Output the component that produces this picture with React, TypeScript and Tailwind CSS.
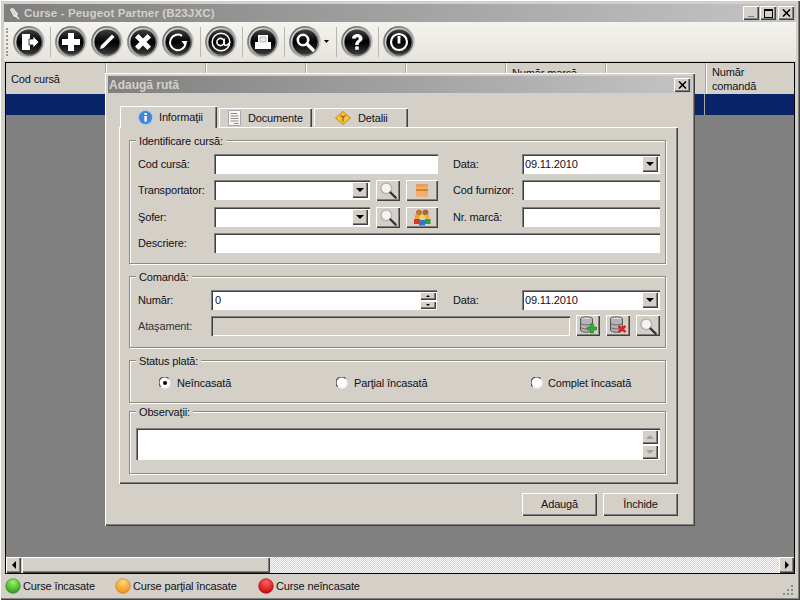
import React, { useId } from "react";

const raised = "shadow-[inset_1px_1px_0_#ffffff,inset_-1px_-1px_0_#404040,inset_-2px_-2px_0_#808080]";
const sunken = "shadow-[inset_1px_1px_0_#808080,inset_2px_2px_0_#404040,inset_-1px_-1px_0_#ffffff]";

function Round({ children }: { children: React.ReactNode }) {
  const id = useId();
  return (
    <svg width="32" height="32" viewBox="0 0 32 32" className="shrink-0">
      <defs>
        <linearGradient id={id + "r"} x1="0" y1="0" x2="1" y2="1">
          <stop offset="0" stopColor="#5a5a5a" />
          <stop offset="0.45" stopColor="#9a9a9a" />
          <stop offset="1" stopColor="#f0f0f0" />
        </linearGradient>
        <linearGradient id={id + "m"} x1="0" y1="0" x2="1" y2="1">
          <stop offset="0" stopColor="#f0f0f0" />
          <stop offset="1" stopColor="#505050" />
        </linearGradient>
        <linearGradient id={id + "b"} x1="0" y1="0" x2="0" y2="1">
          <stop offset="0" stopColor="#404040" />
          <stop offset="0.5" stopColor="#000000" />
          <stop offset="1" stopColor="#3a3a3a" />
        </linearGradient>
      </defs>
      <circle cx="16" cy="16" r="15.9" fill={`url(#${id}r)`} />
      <circle cx="16" cy="16" r="14.2" fill={`url(#${id}m)`} />
      <circle cx="16" cy="16" r="12.6" fill={`url(#${id}b)`} />
      {children}
    </svg>
  );
}

function Sep({ className }: { className: string }) {
  return <div className={"w-[1px] h-[30px] bg-[#b8b6ae] shrink-0 " + className} />;
}

function Glass({ size = 18 }: { size?: number }) {
  return (
    <svg width={size} height={size} viewBox="0 0 16 16">
      <circle cx="6.5" cy="6.5" r="4.8" fill="#f4f4f0" stroke="#b4b4b4" strokeWidth="1.4" />
      <path d="M10.2 10.2 L14.8 14.8" stroke="#333333" strokeWidth="2" strokeLinecap="round" />
    </svg>
  );
}

function Tri({ size = 4 }: { size?: number }) {
  return (
    <svg width={size * 2} height={size} viewBox="0 0 8 4">
      <path d="M0 0 H8 L4 4 Z" fill="#000000" />
    </svg>
  );
}

function Combo({ w, value }: { w: string; value?: string }) {
  return (
    <div className={`${w} h-[20px] bg-white ${sunken} flex items-center justify-between pl-[3px] pr-[2px] shrink-0`}>
      <span className="text-[#101020]">{value}</span>
      <div className={`w-[16px] h-[16px] bg-[#d4d0c8] ${raised} flex items-center justify-center`}>
        <Tri />
      </div>
    </div>
  );
}

function Input({ w }: { w: string }) {
  return <div className={`${w} h-[20px] bg-white ${sunken} shrink-0`} />;
}

function IconBtn({ w, children }: { w: string; children: React.ReactNode }) {
  return (
    <div className={`${w} h-[21px] bg-[#d4d0c8] ${raised} flex items-center justify-center shrink-0`}>{children}</div>
  );
}

function Group({ title, cls, children }: { title: string; cls: string; children: React.ReactNode }) {
  return (
    <div className={`w-[537px] border border-[#8c8a84] shadow-[inset_1px_1px_0_#ffffff,1px_1px_0_#ffffff] ${cls}`}>
      <div className="-mt-[6px] ml-[6px] w-fit px-[3px] h-[13px] leading-[13px] bg-[#d4d0c8]">{title}</div>
      {children}
    </div>
  );
}

function Radio({ checked }: { checked?: boolean }) {
  return (
    <svg width="12" height="12" viewBox="0 0 12 12" className="shrink-0">
      <circle cx="6" cy="6" r="5.5" fill="#ffffff" />
      <path d="M1.6 9.6 A5.5 5.5 0 0 1 9.6 1.6" fill="none" stroke="#555555" strokeWidth="1.3" />
      <path d="M2.4 9.9 A5.5 5.5 0 0 0 9.9 2.4" fill="none" stroke="#f0f0f0" strokeWidth="1" />
      {checked && <circle cx="6" cy="6" r="2" fill="#000000" />}
    </svg>
  );
}

function Dot({ from, to, edge }: { from: string; to: string; edge: string }) {
  const id = useId();
  return (
    <svg width="16" height="16" viewBox="0 0 16 16" className="shrink-0">
      <defs>
        <radialGradient id={id} cx="0.5" cy="0.25" r="0.8">
          <stop offset="0" stopColor={from} />
          <stop offset="1" stopColor={to} />
        </radialGradient>
      </defs>
      <circle cx="8" cy="8" r="7.3" fill={`url(#${id})`} stroke={edge} strokeWidth="0.6" />
    </svg>
  );
}

function Db({ children }: { children: React.ReactNode }) {
  return (
    <svg width="21" height="19" viewBox="0 0 20 19">
      <ellipse cx="8" cy="3" rx="6" ry="2.2" fill="#d8d8d8" stroke="#555555" />
      <path d="M2 3 V14 C2 17 14 17 14 14 V3" fill="#b4b4b4" stroke="#555555" />
      <path d="M2 7 C2 9.5 14 9.5 14 7 M2 11 C2 13.5 14 13.5 14 11" fill="none" stroke="#666666" />
      {children}
    </svg>
  );
}

function Header({ w, children }: { w: string; children?: React.ReactNode }) {
  return (
    <div className={`${w} h-[31px] px-[5px] flex items-center border-r border-[#a8a59d] shadow-[1px_0_0_#ffffff] leading-[14px] shrink-0`}>
      {children}
    </div>
  );
}

export default function App() {
  return (
    <div
      className={`relative w-[800px] h-[600px] overflow-hidden bg-[#d4d0c8] pt-[4px] px-[4px] pb-[2px] text-[11px] tracking-[-0.15px] text-[#10101c] flex flex-col ${raised} font-['Liberation_Sans',Arial,sans-serif]`}
    >
      {/* Title bar */}
      <div className="h-[18px] shrink-0 bg-gradient-to-r from-[#808080] to-[#c4c4c4] flex items-center justify-between pl-[3px] pr-[2px]">
        <div className="flex items-center gap-[3px]">
          <svg width="14" height="14" viewBox="0 0 14 14">
            <path d="M2 3 L6 1 L12 8 L9 12 L6 11 Z" fill="#d8d8d8" stroke="#606060" strokeWidth="0.7" />
            <path d="M8 9 L12 13" stroke="#f0f0f0" strokeWidth="1.5" />
          </svg>
          <span className="font-bold text-[#d4d0c8] text-[11.6px] tracking-[0.1px]">Curse - Peugeot Partner (B23JXC)</span>
        </div>
        <div className="flex gap-[1px]">
          <div className={`w-[16px] h-[14px] bg-[#d4d0c8] ${raised} flex items-end justify-center pb-[3px]`}>
            <div className="w-[6px] h-[1px] bg-[#808080]" />
          </div>
          <div className={`w-[16px] h-[14px] bg-[#d4d0c8] mr-[1px] ${raised} flex items-center justify-center`}>
            <div className="w-[9px] h-[9px] border border-black border-t-2" />
          </div>
          <div className={`w-[16px] h-[14px] bg-[#d4d0c8] ${raised} flex items-center justify-center`}>
            <svg width="9" height="8" viewBox="0 0 9 8"><path d="M1 0.5 L8 7.5 M8 0.5 L1 7.5" stroke="#000" strokeWidth="1.5" /></svg>
          </div>
        </div>
      </div>

      {/* Toolbar */}
      <div className="h-[39px] shrink-0 bg-gradient-to-b from-[#f4f3ee] to-[#e6e4dc] flex items-center pl-[2px]">
        <div className="w-[2px] h-[28px] border-l-2 border-dotted border-[#9a9a94] mr-[5px] shrink-0" />
        <Round>
          <path d="M9 8 H17 V24 H9 Z" fill="#fff" />
          <path d="M16 13 H20 V10 L26 16 L20 22 V19 H16 Z" fill="#fff" stroke="#111" strokeWidth="0.8" />
        </Round>
        <Sep className="ml-[5px] mr-[4px]" />
        <Round><path d="M13 7 H19 V13 H25 V19 H19 V25 H13 V19 H7 V13 H13 Z" fill="#fff" /></Round>
        <div className="w-[4px] shrink-0" />
        <Round><path d="M9 23 L10 19.5 L21 8.5 L23.5 11 L12.5 22 Z" fill="#fff" /></Round>
        <div className="w-[4px] shrink-0" />
        <Round><path d="M8 11.5 L11.5 8 L16 12.5 L20.5 8 L24 11.5 L19.5 16 L24 20.5 L20.5 24 L16 19.5 L11.5 24 L8 20.5 L12.5 16 Z" fill="#fff" /></Round>
        <div className="w-[3px] shrink-0" />
        <Round>
          <path d="M20 9.8 A7.8 7.8 0 1 0 23.6 17" fill="none" stroke="#fff" strokeWidth="2" />
          <path d="M19.5 15 L25.5 15 L23 20 Z" fill="#fff" />
        </Round>
        <Sep className="ml-[6px] mr-[4px]" />
        <Round>
          <circle cx="16" cy="16" r="8.8" fill="none" stroke="#fff" strokeWidth="1.5" />
          <circle cx="15.5" cy="16" r="3.6" fill="none" stroke="#fff" strokeWidth="1.6" />
          <path d="M19.2 12.5 V18 Q19.6 20 22 19 Q24.8 17.5 24.8 16" fill="none" stroke="#fff" strokeWidth="1.5" />
        </Round>
        <Sep className="ml-[5px] mr-[4px]" />
        <Round>
          <path d="M11 9 H21 V16 H24 V23 H8 V16 H11 Z" fill="#fff" />
          <path d="M13 16 H19 V11 H13 Z" fill="#e8e8e8" stroke="#999" strokeWidth="0.6" />
        </Round>
        <Sep className="ml-[5px] mr-[4px]" />
        <Round>
          <circle cx="14" cy="14" r="5.2" fill="none" stroke="#fff" strokeWidth="2.6" />
          <path d="M18 18 L24 24" stroke="#fff" strokeWidth="3.4" strokeLinecap="round" />
        </Round>
        <div className="ml-[2px] mr-[7px] flex w-[6px] justify-center shrink-0"><svg width="5" height="3" viewBox="0 0 5 3"><path d="M0 0 H5 L2.5 3 Z" fill="#000" /></svg></div>
        <Sep className="mr-[4px]" />
        <Round>
          <path d="M11 12.5 C11 6.5 21.5 6.5 21.5 12.5 C21.5 16 17.6 15.6 17.6 19 H14.2 C14.2 14.2 17.8 14.6 17.8 12.6 C17.8 10.8 14.6 10.8 14.6 12.8 Z" fill="#fff" />
          <rect x="14.2" y="20.4" width="3.5" height="3.4" fill="#fff" />
        </Round>
        <Sep className="ml-[5px] mr-[4px]" />
        <Round>
          <circle cx="16" cy="16" r="8" fill="none" stroke="#fff" strokeWidth="2.2" />
          <rect x="14.6" y="10" width="2.8" height="7.5" fill="#fff" />
        </Round>
      </div>

      {/* Table frame */}
      <div className="mt-[1px] flex-1 min-h-0 mx-[1px] border border-black bg-[#808080] flex flex-col">
        <div className="h-[31px] shrink-0 flex bg-[#d4d0c8]">
          <Header w="w-[100px]"><span>Cod cursă</span></Header>
          <Header w="w-[100px]" />
          <Header w="w-[100px]" />
          <Header w="w-[100px]" />
          <Header w="w-[100px]" />
          <Header w="w-[100px]"><span className="pl-[1px] self-start pt-[3px]">Număr marcă</span></Header>
          <Header w="w-[100px]" />
          <div className="flex-1 pl-[6px] flex items-center leading-[14px]">Număr<br />comandă</div>
        </div>
        <div className="h-[21px] shrink-0 bg-[#0a246a] flex justify-end">
          <div className="w-[90px] border-l border-[#a8a59d]" />
        </div>
        <div className="flex-1" />
        <div className="h-[16px] shrink-0 flex bg-[#d4d0c8]">
          <div className={`w-[15px] bg-[#d4d0c8] ${raised} flex items-center justify-center`}>
            <svg width="4" height="8" viewBox="0 0 4 8"><path d="M4 0 V8 L0 4 Z" fill="#000" /></svg>
          </div>
          <div className={`w-[248px] ml-[1px] bg-[#d4d0c8] ${raised}`} />
          <div className="flex-1 bg-[repeating-conic-gradient(#ffffff_0_25%,#d4d0c8_0_50%)] bg-size-[2px_2px]" />
          <div className={`w-[15px] bg-[#d4d0c8] ${raised} flex items-center justify-center`}>
            <svg width="4" height="8" viewBox="0 0 4 8"><path d="M0 0 V8 L4 4 Z" fill="#000" /></svg>
          </div>
        </div>
      </div>

      {/* Status bar */}
      <div className="h-[24px] shrink-0 flex items-center pl-[1px] relative">
        <Dot from="#9ef06a" to="#1f9a10" edge="#2c8020" />
        <span className="ml-[2px] w-[92px]">Curse încasate</span>
        <Dot from="#ffd878" to="#ee8a10" edge="#c87a20" />
        <span className="ml-[2px] w-[125px]">Curse parţial încasate</span>
        <Dot from="#ff6060" to="#cc0000" edge="#a00000" />
        <span className="ml-[2px]">Curse neîncasate</span>
        <div className="absolute right-[2px] bottom-[2px] w-[12px] h-[12px]">
          <svg width="12" height="12" viewBox="0 0 12 12">
            <path d="M9 1h2v2H9zM5 5h2v2H5zM9 5h2v2H9zM1 9h2v2H1zM5 9h2v2H5zM9 9h2v2H9z" fill="#8a8a84" />
          </svg>
        </div>
      </div>

      {/* Dialog */}
      <div className={`absolute left-[105px] top-[73px] w-[590px] h-[453px] bg-[#d4d0c8] p-[3px] ${raised} flex flex-col`}>
        <div className="h-[17px] shrink-0 bg-gradient-to-r from-[#808080] to-[#c4c4c4] flex items-center justify-between pl-[1px] pr-[2px]">
          <span className="font-bold text-[#d4d0c8] text-[12px] tracking-normal">Adaugă rută</span>
          <div className={`w-[16px] h-[14px] bg-[#d4d0c8] ${raised} flex items-center justify-center`}>
            <svg width="9" height="8" viewBox="0 0 9 8"><path d="M1 0.5 L8 7.5 M8 0.5 L1 7.5" stroke="#000" strokeWidth="1.5" /></svg>
          </div>
        </div>

        <div className="pl-[11px] pt-[13px] flex flex-col">
          {/* Tabs */}
          <div className="h-[21px] flex items-end pl-[1px] gap-[2px] relative z-10">
            <div className="w-[97px] h-[22px] -mb-[1px] bg-[#d4d0c8] shadow-[inset_1px_1px_0_#ffffff,inset_-1px_0_0_#404040,inset_-2px_0_0_#808080] flex items-center pl-[18px] gap-[6px]">
              <svg width="15" height="15" viewBox="0 0 15 15">
                <circle cx="7.5" cy="7.5" r="7" fill="#3f86d8" stroke="#b8cfe8" strokeWidth="0.8" />
                <rect x="6.4" y="6" width="2.4" height="5.6" fill="#fff" />
                <rect x="6.4" y="3" width="2.4" height="2" fill="#fff" />
              </svg>
              <span>Informaţii</span>
            </div>
            <div className="w-[93px] h-[19px] bg-[#d4d0c8] shadow-[inset_1px_1px_0_#ffffff,inset_-1px_0_0_#404040,inset_-2px_0_0_#808080] flex items-center pl-[9px] gap-[7px]">
              <svg width="13" height="16" viewBox="0 0 13 16">
                <path d="M0.5 0.5 H12.5 V15.5 H0.5 Z" fill="#f6f6f2" stroke="#a8a8a8" />
                <path d="M2.5 3.5 H9 M2.5 6 H10.5 M2.5 8.5 H10.5 M2.5 11 H10.5 M6 13.5 H10.5" stroke="#8c8c8c" />
              </svg>
              <span className="pt-[2px]">Documente</span>
            </div>
            <div className="w-[94px] h-[19px] bg-[#d4d0c8] shadow-[inset_1px_1px_0_#ffffff,inset_-1px_0_0_#404040,inset_-2px_0_0_#808080] flex items-center pl-[21px] gap-[7px]">
              <svg width="16" height="14" viewBox="0 0 16 14">
                <path d="M8 0.5 L15.5 7 L8 13.5 L0.5 7 Z" fill="#f4c23c" stroke="#c88a14" />
                <path d="M8 10.5 V6 M8 6 L5.5 4.5 M8 6 L10.5 4.5" stroke="#a05a10" strokeWidth="1.2" fill="none" />
              </svg>
              <span className="pt-[1px]">Detalii</span>
            </div>
          </div>

          {/* Panel */}
          <div className={`w-[559px] h-[357px] bg-[#d4d0c8] ${raised} pl-[10px] pt-[13px] flex flex-col`}>
            <Group title="Identificare cursă:" cls="h-[124px]">
              <div className="pt-[6px] pl-[8px] flex flex-col">
                <div className="flex items-center h-[20px]">
                  <span className="w-[76px]">Cod cursă:</span>
                  <Input w="w-[224px]" />
                  <span className="ml-[15px] w-[69px]">Data:</span>
                  <Combo w="w-[138px]" value="09.11.2010" />
                </div>
                <div className="flex items-center h-[20px] mt-[6px]">
                  <span className="w-[76px]">Transportator:</span>
                  <Combo w="w-[156px]" />
                  <div className="ml-[6px]"><IconBtn w="w-[24px]"><Glass /></IconBtn></div>
                  <div className="ml-[6px]">
                    <IconBtn w="w-[32px]">
                      <svg width="14" height="15" viewBox="0 0 14 15">
                        <rect x="1" y="1" width="12" height="13" fill="#f2b070" />
                        <rect x="1" y="1" width="12" height="3" fill="#e8a060" />
                        <rect x="1" y="6" width="12" height="2" fill="#d88030" />
                      </svg>
                    </IconBtn>
                  </div>
                  <span className="ml-[15px] w-[69px]">Cod furnizor:</span>
                  <Input w="w-[138px]" />
                </div>
                <div className="flex items-center h-[20px] mt-[7px]">
                  <span className="w-[76px]">Şofer:</span>
                  <Combo w="w-[156px]" />
                  <div className="ml-[6px]"><IconBtn w="w-[24px]"><Glass /></IconBtn></div>
                  <div className="ml-[6px]">
                    <IconBtn w="w-[32px]">
                      <svg width="18" height="17" viewBox="0 0 18 17">
                        <circle cx="6" cy="3.5" r="3" fill="#b87838" />
                        <circle cx="12.5" cy="3.5" r="3" fill="#a86828" />
                        <circle cx="4" cy="8" r="2.4" fill="#f0a030" />
                        <rect x="1" y="10" width="6" height="5" fill="#d83820" />
                        <circle cx="14" cy="8" r="2.4" fill="#e8b050" />
                        <rect x="12" y="10" width="5.5" height="5" fill="#30a030" />
                        <circle cx="9" cy="9" r="2.4" fill="#f8d040" />
                        <rect x="6" y="11" width="6" height="5.5" fill="#2878d8" />
                      </svg>
                    </IconBtn>
                  </div>
                  <span className="ml-[15px] w-[69px]">Nr. marcă:</span>
                  <Input w="w-[138px]" />
                </div>
                <div className="flex items-center h-[20px] mt-[6px]">
                  <span className="w-[76px]">Descriere:</span>
                  <Input w="w-[446px]" />
                </div>
              </div>
            </Group>

            <Group title="Comandă:" cls="h-[72px] mt-[12px]">
              <div className="pt-[6px] pl-[8px] flex flex-col">
                <div className="flex items-center h-[20px]">
                  <span className="w-[73px]">Număr:</span>
                  <div className={`w-[226px] h-[20px] bg-white ${sunken} flex items-center justify-between pl-[4px] pr-[1px] shrink-0`}>
                    <span>0</span>
                    <div className="flex flex-col gap-[1px]">
                      <div className={`w-[16px] h-[8px] bg-[#d4d0c8] ${raised} flex items-center justify-center`}><svg width="4" height="2" viewBox="0 0 4 2"><path d="M0 2 H4 L2 0 Z" fill="#000" /></svg></div>
                      <div className={`w-[16px] h-[8px] bg-[#d4d0c8] ${raised} flex items-center justify-center`}><Tri size={2} /></div>
                    </div>
                  </div>
                  <span className="ml-[16px] w-[69px]">Data:</span>
                  <Combo w="w-[138px]" value="09.11.2010" />
                </div>
                <div className="flex items-start h-[20px] mt-[6px]">
                  <span className="w-[73px] h-[20px] leading-[20px] text-[#333]">Ataşament:</span>
                  <div className={`w-[359px] h-[20px] bg-[#d4d0c8] ${sunken} shrink-0`} />
                  <div className="ml-[6px] -mt-[1px]">
                    <IconBtn w="w-[24px]">
                      <Db><path d="M12 8 H15 V11 H18 V14 H15 V17 H12 V14 H9 V11 H12 Z" fill="#30b030" stroke="#187818" strokeWidth="0.6" /></Db>
                    </IconBtn>
                  </div>
                  <div className="ml-[6px] -mt-[1px]">
                    <IconBtn w="w-[24px]">
                      <Db><path d="M10 10 L17 16 M17 10 L10 16" stroke="#e02020" strokeWidth="2.6" /></Db>
                    </IconBtn>
                  </div>
                  <div className="ml-[6px] -mt-[1px]">
                    <IconBtn w="w-[24px]"><Glass /></IconBtn>
                  </div>
                </div>
              </div>
            </Group>

            <Group title="Status plată:" cls="h-[43px] mt-[12px]">
              <div className="pt-[9px] pl-[29px] flex items-center h-[21px]">
                <div className="w-[177px] flex items-center gap-[6px]"><Radio checked /><span>Neîncasată</span></div>
                <div className="w-[195px] flex items-center gap-[6px]"><Radio /><span>Parţial încasată</span></div>
                <div className="flex items-center gap-[5px]"><Radio /><span>Complet încasată</span></div>
              </div>
            </Group>

            <Group title="Observaţii:" cls="h-[63px] mt-[8px]">
              <div className="pt-[9px] pl-[6px]">
                <div className={`w-[524px] h-[32px] bg-white ${sunken} flex flex-col items-end justify-center pr-[2px] gap-[1px]`}>
                  <div className={`w-[16px] h-[14px] bg-[#d4d0c8] ${raised} flex items-center justify-center`}><svg width="8" height="4" viewBox="0 0 8 4"><path d="M0 4 H8 L4 0 Z" fill="#a0a0a0" /></svg></div>
                  <div className={`w-[16px] h-[14px] bg-[#d4d0c8] ${raised} flex items-center justify-center`}><svg width="8" height="4" viewBox="0 0 8 4"><path d="M0 0 H8 L4 4 Z" fill="#a0a0a0" /></svg></div>
                </div>
              </div>
            </Group>
          </div>

          {/* Buttons */}
          <div className="w-[559px] flex justify-end gap-[6px] mt-[9px]">
            <div className={`w-[75px] h-[23px] bg-[#d4d0c8] ${raised} flex items-center justify-center`}>Adaugă</div>
            <div className={`w-[75px] h-[23px] bg-[#d4d0c8] ${raised} flex items-center justify-center`}>Închide</div>
          </div>
        </div>
      </div>
    </div>
  );
}
